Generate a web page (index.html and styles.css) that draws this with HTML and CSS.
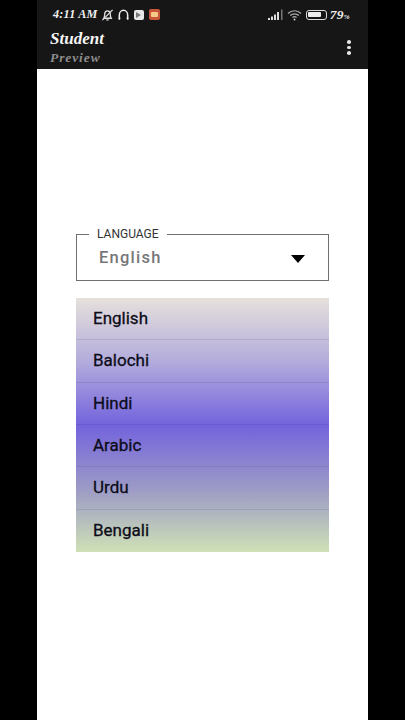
FILE: index.html
```html
<!DOCTYPE html>
<html>
<head>
  <title>Student</title>
  <link rel="stylesheet" href="styles.css">
</head>
<body>
  <div class="phone">
    <div class="topbar">
      <div class="status">
        <div class="status-left">
          <span class="time">4:11 AM</span>
          <svg class="icon" width="13" height="14" viewBox="0 0 14 14" fill="none" stroke="#ddd" stroke-width="1.4">
            <path d="M3 10.500 C4 9 4 7.500 4 6 C4 4 5.500 2.500 7 2.500 C8.500 2.500 10 4 10 6 C10 7.500 10 9 11 10.500 Z"/>
            <path d="M5.800 12.300 H8.200"/>
            <path d="M1.500 12.500 L12.500 1.500"/>
          </svg>
          <svg class="icon" width="13" height="14" viewBox="0 0 14 14" fill="none" stroke="#eee" stroke-width="1.600">
            <path d="M2.500 12 V7 C2.500 4 4.500 2 7 2 C9.500 2 11.500 4 11.500 7 V12"/>
            <path d="M1.800 10.500 H3.600 M10.400 10.500 H12.200"/>
          </svg>
          <span class="app-badge light"><span class="play"></span></span>
          <span class="app-badge orange"><span class="screen"></span></span>
        </div>
        <div class="status-right">
          <svg class="icon" width="16" height="11" viewBox="0 0 16 11" fill="#ddd">
            <rect x="0" y="9" width="2" height="2"/>
            <rect x="3" y="7.500" width="2" height="3.500"/>
            <rect x="6" y="5.500" width="2" height="5.500"/>
            <rect x="9" y="3" width="2" height="8"/>
            <rect x="13" y="0.500" width="1.500" height="10.500" fill="#777"/>
          </svg>
          <svg class="icon" width="16" height="12" viewBox="0 0 16 12" fill="none" stroke="#aaa" stroke-width="1.200">
            <path d="M1 4.500 C4.500 0.800 10.500 0.800 14 4.500"/>
            <path d="M3.200 6.500 C5.500 4.200 9.500 4.200 11.800 6.500"/>
            <path d="M5.400 8.500 C6.600 7.400 8.400 7.400 9.600 8.500"/>
            <circle cx="7.500" cy="10.500" r="0.900" fill="#ddd" stroke="none"/>
          </svg>
          <span class="battery"><span class="battery-fill"></span></span>
          <span class="percent">79<small>%</small></span>
        </div>
      </div>
      <div class="appbar">
        <div class="titles">
          <div class="title">Student</div>
          <div class="subtitle">Preview</div>
        </div>
        <div class="menu"><span></span><span></span><span></span></div>
      </div>
    </div>
    <div class="content">
      <fieldset class="dropdown">
        <legend>LANGUAGE</legend>
        <span class="dropdown-value">English</span>
        <span class="arrow"></span>
      </fieldset>
      <ul class="options">
        <li>English</li>
        <li>Balochi</li>
        <li>Hindi</li>
        <li>Arabic</li>
        <li>Urdu</li>
        <li>Bengali</li>
      </ul>
    </div>
  </div>
</body>
</html>
```

FILE: styles.css
```css
* {
  box-sizing: border-box;
}

html, body {
  height: 100%;
}

body {
  margin: 0;
  background-color: #000;
  font-family: Roboto, sans-serif;
  overflow: hidden;
}

.phone {
  width: 331px;
  height: 720px;
  margin-left: 37px;
  background-color: #fff;
}

.topbar {
  height: 69px;
  background-color: #161616;
  padding: 0 13px;
  font-family: "Liberation Serif", serif;
  font-style: italic;
  font-weight: bold;
}

.status {
  display: flex;
  justify-content: space-between;
  align-items: center;
  height: 29px;
}

.status-left, .status-right {
  display: flex;
  align-items: center;
}

.status-left {
  gap: 3px;
  margin-left: 3px;
}

.status-right {
  gap: 3px;
  margin-right: 5px;
}

.time {
  color: #f0f0f0;
  font-size: 12.200px;
  letter-spacing: 0.2px;
}

.icon {
  display: block;
}

.app-badge {
  display: flex;
  justify-content: center;
  align-items: center;
  width: 10px;
  height: 10px;
  margin-left: 1px;
  border-radius: 2px;
}

.app-badge.light {
  background-color: #e8e8e8;
}

.app-badge.orange {
  width: 11px;
  height: 11px;
  margin-left: 2px;
  background-color: #c9553a;
}

.play {
  width: 0;
  height: 0;
  border-left: 5px solid #777;
  border-top: 3px solid transparent;
  border-bottom: 3px solid transparent;
}

.screen {
  width: 7px;
  height: 5px;
  border-radius: 1px;
  background-color: #f5c98a;
}

.battery {
  display: block;
  width: 21px;
  height: 10px;
  padding: 1.500px;
  border: 1px solid #ddd;
  border-radius: 3px;
}

.battery-fill {
  display: block;
  width: 80%;
  height: 100%;
  border-radius: 1px;
  background-color: #eee;
}

.percent {
  color: #eee;
  font-size: 13.500px;
  letter-spacing: 0.3px;
}

.percent small {
  font-size: 7px;
}

.appbar {
  display: flex;
  justify-content: space-between;
  align-items: center;
}

.title {
  color: #f5f5f5;
  font-size: 17px;
  line-height: 19px;
}

.subtitle {
  color: #8c8c8c;
  font-size: 13.500px;
  line-height: 20px;
  letter-spacing: 0.9px;
}

.menu {
  display: flex;
  flex-direction: column;
  gap: 2px;
  margin-right: 4px;
  margin-bottom: 2px;
}

.menu span {
  width: 4px;
  height: 3.500px;
  border-radius: 50%;
  background-color: #e8e8e8;
}

.content {
  padding: 157px 39px 0 39px;
}

.dropdown {
  display: flex;
  justify-content: space-between;
  align-items: center;
  width: 253px;
  height: 55px;
  margin: 0;
  padding: 0 23px 8px 22px;
  border: 1px solid #6f6f6f;
}

.dropdown legend {
  margin-left: -10px;
  padding: 0 8px;
  color: #333;
  font-size: 12px;
  line-height: 16px;
}

.dropdown-value {
  color: #77777a;
  font-size: 16.500px;
  font-weight: 500;
  letter-spacing: 1.250px;
}

.arrow {
  width: 0;
  height: 0;
  margin-top: 3px;
  border-left: 7px solid transparent;
  border-right: 7px solid transparent;
  border-top: 8px solid #000;
}

.options {
  width: 253px;
  height: 254px;
  margin: 17px 0 0 0;
  padding: 0;
  list-style: none;
  background: linear-gradient(#e6e0dc 0%, #b3acdc 25%, #7363dd 50%, #9c9ac6 75%, #cfe1b5 100%);
}

.options li {
  height: 42.330px;
  padding-left: 17px;
  color: #0c0c18;
  font-size: 17px;
  line-height: 40px;
  -webkit-text-stroke: 0.3px #0c0c18;
  border-bottom: 1px solid rgba(60, 60, 110, 0.14);
}

.options li:last-child {
  border-bottom: none;
}
```
